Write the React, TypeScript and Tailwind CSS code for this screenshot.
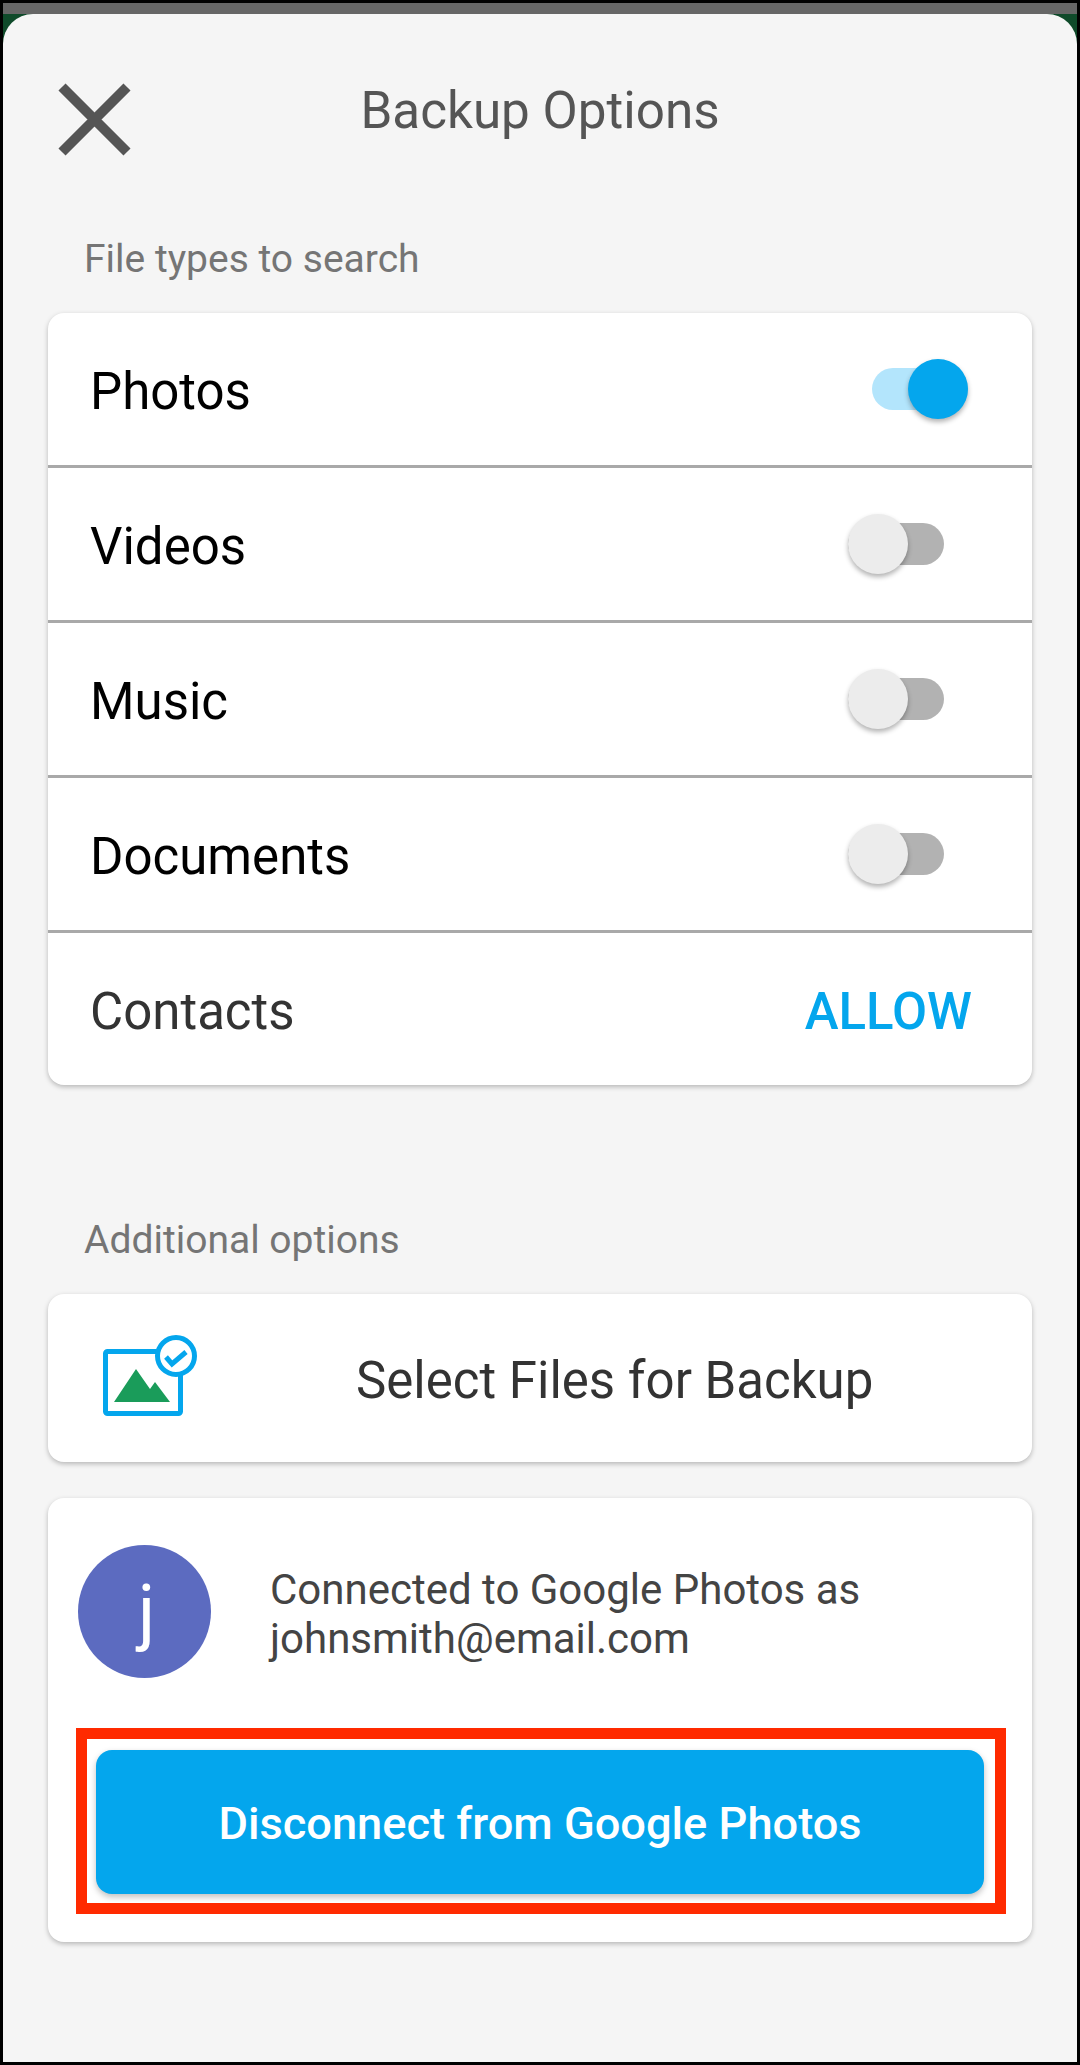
function Toggle({ on }: { on?: boolean }) {
  return (
    <div className={on ? "relative w-[96px] h-[42px] mr-[64px] rounded-full bg-[#b3e5fc]" : "relative w-[96px] h-[42px] mr-[88px] rounded-full bg-[#b2b2b2]"}>
      <div
        className={
          on
            ? "absolute right-0 top-[-9px] w-[60px] h-[60px] rounded-full bg-[#04a6ed] shadow-[0_3px_5px_rgba(0,0,0,0.3)]"
            : "absolute left-0 top-[-9px] w-[60px] h-[60px] rounded-full bg-[#ececec] shadow-[0_3px_5px_rgba(0,0,0,0.3)]"
        }
      />
    </div>
  );
}

function Row({ label, on }: { label: string; on?: boolean }) {
  return (
    <div className="flex items-center justify-between h-[155px] pl-[42px] border-b-[3px] border-[#a9a9a9]">
      <span className="pt-[7px] text-[51px] text-black">{label}</span>
      <Toggle on={on} />
    </div>
  );
}

function BackupIcon() {
  return (
    <svg width="100" height="90" viewBox="0 0 100 90" className="ml-[52px] shrink-0">
      <rect x="5.5" y="18.5" width="75" height="62" rx="2" fill="#fff" stroke="#04a6ed" strokeWidth="5" />
      <polygon points="14,69 36,36 50,56 55,49 70,69" fill="#1a9c5a" />
      <circle cx="76" cy="23" r="18.5" fill="#fff" stroke="#04a6ed" strokeWidth="5" />
      <path d="M66 24 L72 31 L86 19" fill="none" stroke="#04a6ed" strokeWidth="5" />
    </svg>
  );
}

export default function App() {
  return (
    <div className="w-[1080px] h-[2065px] bg-black p-[3px] font-['Roboto',sans-serif]">
      <div className="h-[11px] bg-[#666666]" />
      <div className="h-[2048px] bg-[#0f4a2a]">
        <div className="h-full rounded-t-[30px] bg-[#f5f5f5] px-[45px]">
          {/* Header */}
          <div className="grid grid-cols-[1fr_auto_1fr] items-center h-[194px]">
            <svg width="73" height="73" viewBox="0 0 73 73" className="ml-[10px] mt-[16px]">
              <path d="M4 4 L69 69 M69 4 L4 69" fill="none" stroke="#555555" strokeWidth="10" />
            </svg>
            <h1 className="text-[51.2px] font-normal text-[#555555]">Backup Options</h1>
            <div />
          </div>

          {/* File types */}
          <p className="pl-[36px] pt-[29px] pb-[32px] text-[39px] leading-[44px] text-[#757575]">File types to search</p>
          <div className="bg-white rounded-[16px] shadow-[0_2px_5px_rgba(0,0,0,0.25)]">
            <Row label="Photos" on />
            <Row label="Videos" />
            <Row label="Music" />
            <Row label="Documents" />
            <div className="flex items-center justify-between h-[152px] pl-[42px] pr-[60px]">
              <span className="pt-[7px] text-[51px] text-[#333333]">Contacts</span>
              <span className="pt-[7px] text-[51px] font-medium text-[#04a6ed]">ALLOW</span>
            </div>
          </div>

          {/* Additional options */}
          <p className="pl-[36px] mt-[133px] mb-[32px] text-[39px] leading-[44px] text-[#757575]">Additional options</p>
          <div className="flex items-center h-[168px] bg-white rounded-[16px] shadow-[0_2px_5px_rgba(0,0,0,0.25)]">
            <BackupIcon />
            <span className="ml-[156px] pt-[6px] text-[51px] text-[#333333]">Select Files for Backup</span>
          </div>

          <div className="mt-[36px] h-[444px] bg-white rounded-[16px] pt-[47px] pl-[28px] pr-[26px] shadow-[0_2px_5px_rgba(0,0,0,0.25)]">
            <div className="flex items-center h-[133px] pl-[2px]">
              <div className="flex items-center justify-center w-[133px] h-[133px] pl-[4px] rounded-full bg-[#5c6bc0] text-[72px] text-white">j</div>
              <p className="ml-[59px] pt-[4px] text-[42px] leading-[49px] text-[#444444]">
                Connected to Google Photos as
                <br />
                johnsmith@email.com
              </p>
            </div>
            {/* Red highlight round the button */}
            <div className="mt-[50px] h-[186px] border-[11px] border-[#ff2a00] pt-[11px] pl-[9px] pr-[11px]">
              <button className="w-full h-[144px] pt-[4px] rounded-[16px] bg-[#04a6ed] text-[45.2px] font-medium text-white shadow-[0_3px_6px_rgba(0,0,0,0.25)]">
                Disconnect from Google Photos
              </button>
            </div>
          </div>
        </div>
      </div>
    </div>
  );
}
